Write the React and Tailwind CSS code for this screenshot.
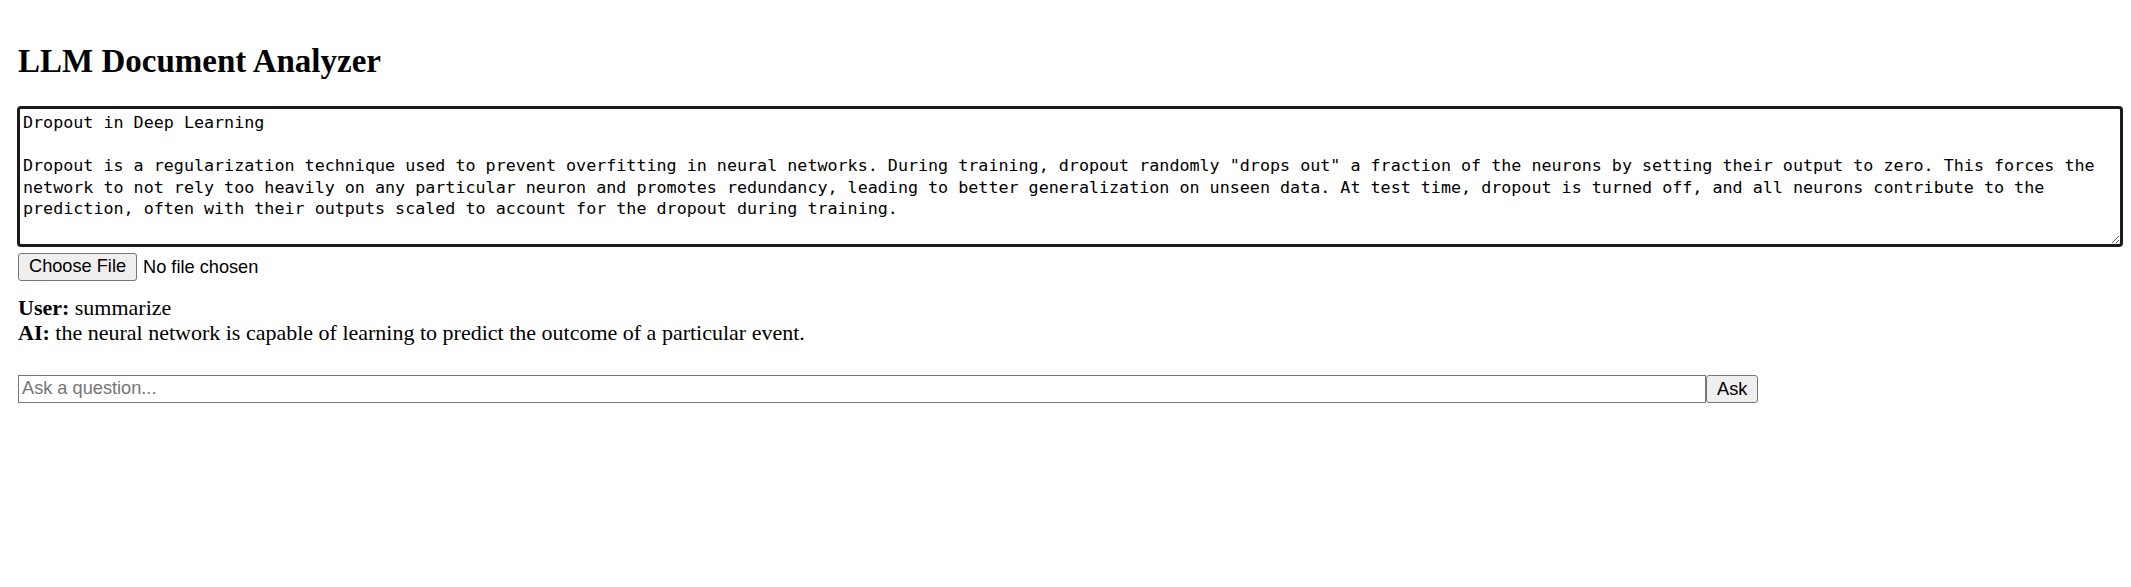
import React, { useEffect, useRef, useState } from "react";

const DOC_TEXT = `Dropout in Deep Learning

Dropout is a regularization technique used to prevent overfitting in neural networks. During training, dropout randomly "drops out" a fraction of the neurons by setting their output to zero. This forces the network to not rely too heavily on any particular neuron and promotes redundancy, leading to better generalization on unseen data. At test time, dropout is turned off, and all neurons contribute to the prediction, often with their outputs scaled to account for the dropout during training.`;

const App = () => {
  const docRef = useRef(null);
  const [question, setQuestion] = useState("");
  const [chat] = useState([
    { role: "User", text: "summarize" },
    { role: "AI", text: "the neural network is capable of learning to predict the outcome of a particular event." },
  ]);

  // put the caret at the end of the document text, like the screenshot
  useEffect(() => {
    const el = docRef.current;
    if (!el) return;
    el.focus();
    el.setSelectionRange(el.value.length, el.value.length);
  }, []);

  return (
    <div className="min-h-screen bg-white text-black pt-[43px] pl-[17px] pr-[8px]">
      <h2 className="font-['Liberation_Serif',serif] font-bold text-[33px] leading-[37.5px] mb-[25px] pl-px">
        LLM Document Analyzer
      </h2>

      {/* Document text */}
      <textarea
        ref={docRef}
        defaultValue={DOC_TEXT}
        className="block w-full h-[141px] border-[3px] border-[#1b1b1b] rounded-[4px] px-[3px] pt-[3px] outline-none caret-black font-['DejaVu_Sans_Mono',monospace] text-[16.72px] leading-[21.7px] text-black"
      />

      {/* File upload */}
      <div className="mt-[6px] pl-px">
        <input
          type="file"
          className="font-['Liberation_Sans',Arial,sans-serif] text-[18.2px] leading-[21px] text-black file:bg-[#efefef] file:border file:border-solid file:border-[#767676] file:rounded-[3px] file:px-[10px] file:py-[2.5px] file:mr-[6px] file:text-black"
        />
      </div>

      {/* Conversation */}
      <div className="mt-[14px] pl-px font-['Liberation_Serif',serif] text-[22px] leading-[25px]">
        {chat.map((m, i) => (
          <div key={i}>
            <strong>{m.role}:</strong> {m.text}
          </div>
        ))}
      </div>

      {/* Ask box */}
      <div className="flex mt-[30px] pl-px font-['Liberation_Sans',Arial,sans-serif] text-[18.2px]">
        <input
          type="text"
          value={question}
          onChange={(e) => setQuestion(e.target.value)}
          placeholder="Ask a question..."
          className="w-[1688px] h-[28px] border border-[#767676] px-[3px] outline-none placeholder:text-[#757575]"
        />
        <button className="h-[28px] px-[10px] bg-[#efefef] border border-[#767676] rounded-[3px] text-black">
          Ask
        </button>
      </div>
    </div>
  );
};

export default App;
